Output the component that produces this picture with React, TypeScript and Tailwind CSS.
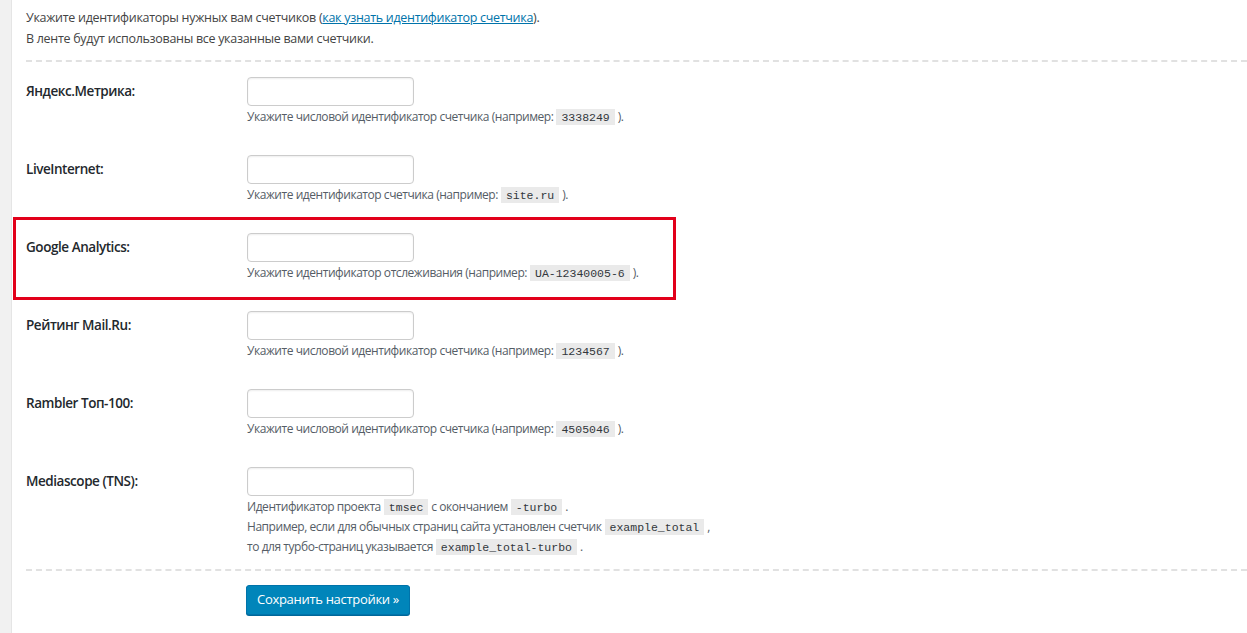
import React from "react";

const font = { fontFamily: '"Open Sans", "Noto Sans", sans-serif' };

function Code({ children }: { children: React.ReactNode }) {
  return (
    <code className="bg-[#eaeaea] px-[5px] pt-[2px] pb-[1px] mx-[3px] text-[11.5px] tracking-normal font-['Liberation_Mono',monospace] text-[#32373c]">
      {children}
    </code>
  );
}

interface Row {
  label: string;
  desc: React.ReactNode;
  marked?: boolean;
}

const rows: Row[] = [
  {
    label: "Яндекс.Метрика:",
    desc: (
      <p>
        Укажите числовой идентификатор счетчика (например:<Code>3338249</Code>).
      </p>
    )
  },
  {
    label: "LiveInternet:",
    desc: (
      <p>
        Укажите идентификатор счетчика (например:<Code>site.ru</Code>).
      </p>
    )
  },
  {
    label: "Google Analytics:",
    marked: true,
    desc: (
      <p>
        Укажите идентификатор отслеживания (например:<Code>UA-12340005-6</Code>).
      </p>
    )
  },
  {
    label: "Рейтинг Mail.Ru:",
    desc: (
      <p>
        Укажите числовой идентификатор счетчика (например:<Code>1234567</Code>).
      </p>
    )
  },
  {
    label: "Rambler Топ-100:",
    desc: (
      <p>
        Укажите числовой идентификатор счетчика (например:<Code>4505046</Code>).
      </p>
    )
  },
  {
    label: "Mediascope (TNS):",
    desc: (
      <>
        <p>
          Идентификатор проекта<Code>tmsec</Code>с окончанием<Code>-turbo</Code>.
        </p>
        <p>
          Например, если для обычных страниц сайта установлен счетчик
          <Code>example_total</Code>,
        </p>
        <p>
          то для турбо-страниц указывается<Code>example_total-turbo</Code>.
        </p>
      </>
    )
  }
];

export default function App() {
  return (
    <div className="flex min-h-[633px] bg-white text-[#444]" style={font}>
      {/* серая полоса слева */}
      <div className="w-[12px] shrink-0 bg-[#f1f1f1] border-r border-[#e5e5e5]" />

      <div className="flex-1 pl-[14px]">
        <div className="pt-[7px] text-[12.5px] leading-[21px] tracking-[-0.3px]">
          <p>
            Укажите идентификаторы нужных вам счетчиков (
            <a href="#" className="text-[#0073aa] underline">
              как узнать идентификатор счетчика
            </a>
            ).
          </p>
          <p>В ленте будут использованы все указанные вами счетчики.</p>
        </div>

        <div className="mt-[11px] border-t-2 border-dashed border-[#e1e1e1]" />

        {rows.map((row) => (
          <div key={row.label} className="relative flex min-h-[78px] pt-[15px]">
            {row.marked && (
              <div className="absolute left-[-13px] top-[-1px] w-[663px] h-[83px] border-[3px] border-[#e2001a] pointer-events-none" />
            )}
            <div className="w-[221px] shrink-0 pt-[4px] text-[13.5px] font-semibold tracking-[-0.45px] text-[#23282d]">
              {row.label}
            </div>
            <div>
              <input
                type="text"
                className="block w-[167px] h-[29px] border border-[#ccc] rounded-[4px] bg-white shadow-[inset_0_1px_2px_rgba(0,0,0,0.07)]"
              />
              <div className="mt-[1px] text-[12px] leading-[19px] text-[#555d66] tracking-[-0.45px]">
                {row.desc}
              </div>
            </div>
          </div>
        ))}

        <div className="mt-[12px] border-t-2 border-dashed border-[#e1e1e1]" />

        <div className="pl-[220px] pt-[14px]">
          <button className="h-[30px] px-[10px] rounded-[3px] bg-[#0085ba] border border-[#0073aa] shadow-[0_1px_0_#006799] text-white text-[13px] tracking-[-0.3px]">
            Сохранить настройки »
          </button>
        </div>
      </div>
    </div>
  );
}
